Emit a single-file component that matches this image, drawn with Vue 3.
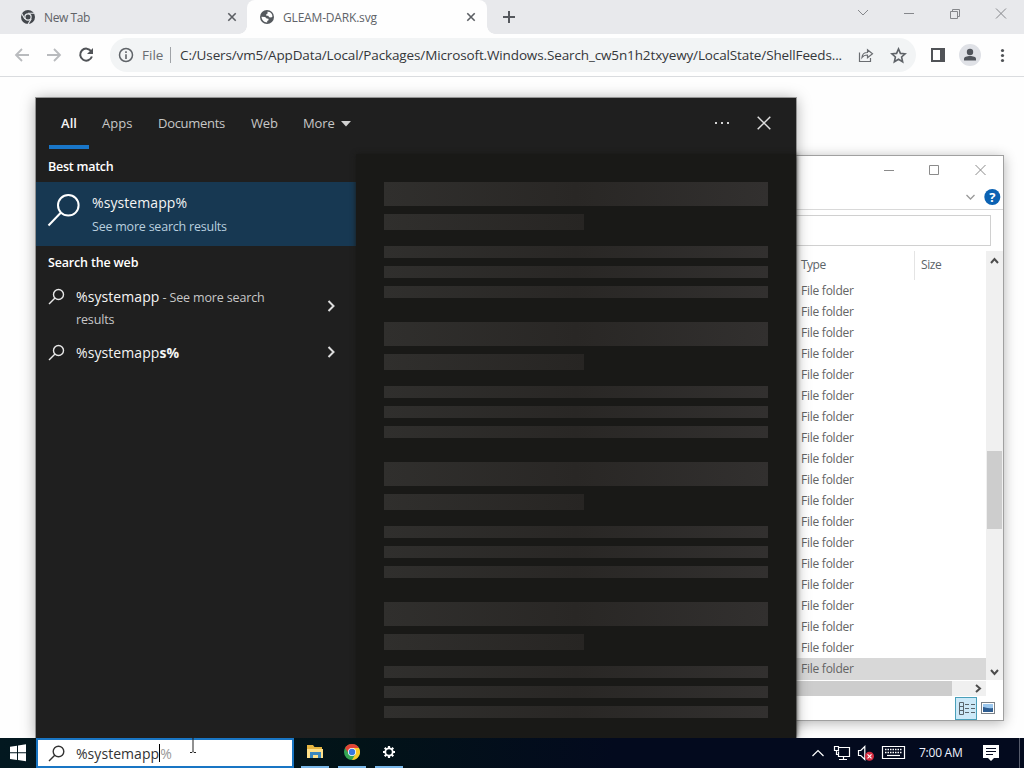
<script setup>
const rows = Array.from({ length: 19 }, (_, i) => i)
const blocks = [0, 1, 2, 3]
</script>

<template>
  <div class="desktop">
    <section class="browser">
      <div class="tabs">
        <div class="tab first">
          <svg class="fav" viewBox="0 0 16 16"><circle cx="8" cy="8" r="7" fill="#43474c" /><path d="M8 4.300h6.200M4.800 9.900 1.700 4.500M11.200 9.900 8 15.200" stroke="#e8eaed" stroke-width="1.100" /><circle cx="8" cy="8" r="3.700" fill="#e8eaed" /><circle cx="8" cy="8" r="2.500" fill="#43474c" /></svg>
          <span class="t1">New Tab</span>
          <svg class="x" viewBox="0 0 10 10"><path d="m1.300 1.300 7.400 7.400m0-7.400L1.300 8.700" /></svg>
        </div>
        <div class="tab active">
          <svg class="fav" viewBox="0 0 16 16"><circle cx="8" cy="8" r="7" fill="#55595e" /><path d="M8.300 2.800c2.600-.4 5 1.700 5.200 4.700l-1.300 1-2-.2-1-1.500H7.300V5.300l1.500-1zM2.500 7.800l3.600.2 1.600 1.600 1.800.2v1.500l-1.300.6v1.500C5 13.300 2.700 11 2.500 7.800z" fill="#fff" /></svg>
          <span class="t2">GLEAM-DARK.svg</span>
          <svg class="x" viewBox="0 0 10 10"><path d="m1.300 1.300 7.400 7.400m0-7.400L1.300 8.700" /></svg>
        </div>
        <svg class="plus" viewBox="0 0 12 12"><path d="M6 0v12M0 6h12" /></svg>
        <svg class="winctl" viewBox="0 0 160 20"><path d="m8 7 5 5 5-5M54 10.500h10M100.500 8.500h7v7h-7zM102.500 8.500v-2h7v7h-2M146 5.500l10 10m0-10-10 10" /></svg>
      </div>
      <div class="bar">
        <svg class="nav" viewBox="0 0 110 38">
          <g fill="none" stroke="#b9bbbe" stroke-width="1.800"><path d="M29 20H16m6-6-6 6 6 6M47 20h13m-6-6 6 6-6 6" /></g>
          <path d="M91.200 16.300a6 6 0 1 0 .7 5.200" fill="none" stroke="#505357" stroke-width="2" /><path d="M93 13v6h-6z" fill="#505357" />
        </svg>
        <div class="omni">
          <svg class="info" viewBox="0 0 16 16"><circle cx="8" cy="8" r="6.500" fill="none" stroke="#5f6368" stroke-width="1.500" /><path d="M8 7.300V12M8 4.200v1.700" stroke="#5f6368" stroke-width="1.600" /></svg>
          <span class="file">File</span><i class="divider"></i>
          <span class="url">C:/Users/vm5/AppData/Local/Packages/Microsoft.Windows.Search_cw5n1h2txyewy/LocalState/ShellFeeds...</span>
          <svg class="share" viewBox="0 0 16 16"><path d="M1.500 5.500v9h11V11M4 10.500c.2-3.500 2.200-5 5.500-5V2.700l5 4-5 4V8C7 8 5.300 8.700 4 10.500z" /></svg>
          <svg class="star" viewBox="0 0 16 16"><path d="m8 1.800 1.800 4.200 4.500.4-3.400 3 1 4.500L8 11.500l-3.900 2.400 1-4.500-3.400-3 4.500-.4z" /></svg>
        </div>
        <svg class="tools" viewBox="0 0 100 38">
          <path d="M10 14h12v12H10z" fill="none" stroke="#505357" stroke-width="2" /><path d="M18 13h5v14h-5z" fill="#505357" />
          <circle cx="48" cy="20" r="11" fill="#dfe1e6" /><circle cx="48" cy="17" r="3.200" fill="#50545b" /><path d="M42 25.500v-1.700c0-1.800 3-2.800 6-2.800s6 1 6 2.800v1.700z" fill="#50545b" />
          <g fill="#505357"><circle cx="80.500" cy="15.500" r="1.600" /><circle cx="80.500" cy="20.500" r="1.600" /><circle cx="80.500" cy="25.500" r="1.600" /></g>
        </svg>
      </div>
    </section>

    <section class="explorer">
      <svg class="exctl" viewBox="0 0 223 53">
        <g fill="none" stroke="#8b8b8b" stroke-width="1"><path d="M103 14.500h10M148.500 9.500h9v9h-9zM194.500 9l10 10m0-10-10 10" /></g>
        <path d="m185.500 39 4 4 4-4" fill="none" stroke="#999" stroke-width="1.300" />
        <circle cx="211.300" cy="41" r="8" fill="#0b62b3" />
        <text x="211.300" y="45.700" text-anchor="middle">?</text>
      </svg>
      <div class="address"><div></div></div>
      <div class="listing">
        <div class="content">
          <div class="columns"><span class="type">Type</span><span class="size">Size</span></div>
          <div v-for="r in rows" :key="r" class="row" :class="{ selected: r === 18 }"><span>File folder</span></div>
        </div>
        <div class="vscroll">
          <svg viewBox="0 0 15 18"><path d="m4 12 3.500-4 3.500 4" /></svg>
          <i></i>
          <svg class="down" viewBox="0 0 15 18"><path d="m4 8 3.500 4 3.500-4" /></svg>
        </div>
      </div>
      <div class="hscroll"><i></i><svg viewBox="0 0 15 15"><path d="m6 4 4 3.500-4 3.500" /></svg></div>
      <div class="status">
        <svg class="details" viewBox="0 0 22 23"><rect x=".5" y=".5" width="21" height="22" /><path d="M4.500 5.500h4v12h-4zM4.500 9.500h4M4.500 13.500h4M10 7.500h4M16 7.500h4M10 11.500h4M16 11.500h4M10 15.500h4M16 15.500h4" stroke="#59656c" /></svg>
        <svg class="thumb" viewBox="0 0 14 12"><rect x=".5" y=".5" width="13" height="11" fill="#fff" stroke="#7c8288" /><path d="M2 2h10v8H2z" fill="#9bc7ee" /><path d="M2 5c3 0 4 2 10 1v4H2z" fill="#2e5d91" /></svg>
      </div>
    </section>

    <section class="search">
      <nav>
        <b class="all">All</b><span class="apps">Apps</span><span class="docs">Documents</span><span class="webtab">Web</span><span class="more">More</span>
        <svg class="caret" viewBox="0 0 10 6"><path d="M0 0h10L5 5.500z" /></svg>
        <svg class="dots" viewBox="0 0 16 4"><path d="M1 1h2v2H1zM7 1h2v2H7zM13 1h2v2h-2z" /></svg>
        <svg class="close" viewBox="0 0 14 14"><path d="m.7.700 12.600 12.600m0-12.600L.7 13.300" /></svg>
      </nav>
      <div class="panes">
        <div class="results">
          <h2>Best match</h2>
          <div class="best">
            <svg viewBox="0 0 34 34"><circle cx="21.300" cy="12.300" r="10.300" /><path d="M14 19.500 1.500 32.500" /></svg>
            <div><p class="main">%systemapp%</p><p class="sub">See more search results</p></div>
          </div>
          <h2 class="web">Search the web</h2>
          <div class="hit tall">
            <svg class="mag" viewBox="0 0 17 17"><circle cx="10.500" cy="6.500" r="5" /><path d="m7 10-6 6" /></svg>
            <p><span class="main">%systemapp</span><span class="sub"> - See more search<br>results</span></p>
            <svg class="chev" viewBox="0 0 8 12"><path d="m1.500 1 5 5-5 5" /></svg>
          </div>
          <div class="hit">
            <svg class="mag" viewBox="0 0 17 17"><circle cx="10.500" cy="6.500" r="5" /><path d="m7 10-6 6" /></svg>
            <p><span class="main">%systemapp<b>s%</b></span></p>
            <svg class="chev" viewBox="0 0 8 12"><path d="m1.500 1 5 5-5 5" /></svg>
          </div>
        </div>
        <div class="preview">
          <div v-for="b in blocks" :key="b" class="skeleton"><i class="title"></i><i class="short"></i><i></i><i></i><i></i></div>
        </div>
      </div>
    </section>

    <footer class="taskbar">
      <svg class="start" viewBox="0 0 36 30"><path d="m10 8.700 7-1v6.600h-7zM18 7.500l8-1.200v8h-8zM10 15.300h7v6.600l-7-1zM18 15.300h8v8l-8-1.200z" /></svg>
      <div class="input">
        <svg class="mag" viewBox="0 0 17 17"><circle cx="10.500" cy="6.500" r="5.300" /><path d="m7 10-6 6" /></svg>
        <span class="typed">%systemapp</span><i></i><span class="ghost">%</span>
      </div>
      <div class="app"><svg class="folder" viewBox="0 0 18 16"><path d="M1 1h6l1.500 2H16v11H1z" fill="#e5b541" /><path d="M1 5h16v9H1z" fill="#ffe08a" /><path d="M4 8h11v6h-3v-3H7v3H4z" fill="#3c87bd" /></svg></div>
      <div class="app"><svg viewBox="0 0 16 16"><circle cx="8" cy="8" r="8" fill="#35a453" /><path d="M1.070 4A8 8 0 0 1 14.930 4H8v4L5 9.700z" fill="#e24335" /><path d="M14.930 4A8 8 0 0 1 8 16l3.500-6L8 4z" fill="#fbc928" /><circle cx="8" cy="8" r="4" fill="#fff" /><circle cx="8" cy="8" r="3.200" fill="#3978e0" /></svg></div>
      <div class="app"><svg viewBox="0 0 16 16"><circle cx="8" cy="8" r="3.700" fill="none" stroke="#fff" stroke-width="1.800" /><path d="M8 2v2M8 12v2M2 8h2M12 8h2M3.760 3.760l1.400 1.400M10.840 10.840l1.400 1.400M3.760 12.240l1.400-1.400M10.840 5.160l1.400-1.400" stroke="#fff" stroke-width="2.200" /></svg></div>
      <svg class="tray" viewBox="0 0 100 30">
        <g fill="none" stroke="#fff" stroke-width="1.200"><path d="m2.500 18 5.500-5.500 5.500 5.500" /><path d="M28 9.500h11.500v9H28.500v-5M33.500 18.500v3M29 21.500h8M24.500 8.500h4v4h-4zM26.500 12.500v4h2" /><path d="M48.500 12.500h2.300l4-4v13l-4-4h-2.300z" /><path d="M72.500 8.500h22v12h-22z" /></g>
        <path d="M75 11.500h17M75 14.500h17" stroke="#fff" stroke-width="1.500" stroke-dasharray="1.500 1" /><path d="M77 17.500h13" stroke="#fff" stroke-width="1.200" />
        <circle cx="59.500" cy="18.300" r="4.500" fill="#d52d42" /><path d="m57.500 16.300 4 4m0-4-4 4" stroke="#fff" stroke-width="1.100" />
      </svg>
      <time>7:00 AM</time>
      <svg class="notice" viewBox="0 0 16 16"><path d="M0 0h16v13h-5l-3 3-3-3H0z" fill="#fff" /><path d="M3 3.500h10M3 6.500h10M3 9.500h7" stroke="#050b20" stroke-width="1.200" /></svg>
      <i class="edge"></i>
    </footer>
    <svg class="cursor" viewBox="0 0 8 16"><path d="M1 .5h2l1 1 1-1h2M4 1.500v13M1 15.500h2l1-1 1 1h2" /></svg>
  </div>
</template>

<style>
body { margin: 0; overflow: hidden; }
</style>

<style scoped>
* { box-sizing: border-box; }
svg { display: block; flex: none; }
p, h2 { margin: 0; }
.desktop { position: relative; width: 1024px; height: 768px; overflow: hidden; background: #fefefe; font-family: "Open Sans", "Noto Sans", sans-serif; white-space: nowrap; }
.tabs { height: 34px; background: #e8e9ec; display: flex; align-items: center; position: relative; }
.tab { display: flex; align-items: center; height: 34px; font-size: 12px; color: #606368; }
.tab.first { width: 247px; padding-left: 20px; }
.tab.active { width: 240px; padding-left: 12px; background: #fefefe; border-radius: 8px 8px 0 0; position: relative; }
.tab.active::before, .tab.active::after { content: ""; position: absolute; bottom: 0; width: 8px; height: 8px; }
.tab.active::before { left: -8px; background: radial-gradient(circle at 0 0, transparent 7.500px, #fefefe 8px); }
.tab.active::after { right: -8px; background: radial-gradient(circle at 100% 0, transparent 7.500px, #fefefe 8px); }
.fav { width: 16px; height: 16px; margin-right: 8px; }
.x { width: 10px; height: 10px; margin-left: auto; margin-right: 10px; fill: none; stroke: #5b5e63; stroke-width: 1.600; }
.tab.active .x { margin-right: 11px; }
.t1 { letter-spacing: -.4px; }
.t2 { letter-spacing: -.18px; }
.plus { width: 12px; height: 12px; margin-left: 16px; stroke: #55585d; stroke-width: 2; }
.winctl { width: 160px; height: 20px; margin-left: auto; margin-right: 14px; margin-top: -8px; fill: none; stroke: #85878b; stroke-width: 1; }
.bar { height: 43px; padding-top: 4px; display: flex; border-bottom: 1px solid #dadcdf; }
.nav { width: 110px; height: 38px; margin-top: -3px; }
.omni { width: 806px; height: 34px; border-radius: 17px; background: #f2f4f5; display: flex; align-items: center; padding-left: 8px; font-size: 14px; }
.info { width: 16px; height: 16px; margin-right: 8px; }
.file { width: 28px; color: #6a6d72; font-size: 13.500px; }
.divider { width: 1px; height: 16px; background: #a0a3a7; }
.url { width: 677px; margin-left: 9px; color: #35373a; font-size: 13.500px; letter-spacing: -.128px; }
.share { width: 16px; height: 16px; margin-left: 1px; fill: none; stroke: #6a6d71; stroke-width: 1.200; }
.star { width: 17px; height: 17px; margin-left: 16px; fill: none; stroke: #5f6368; stroke-width: 1.500; }
.tools { width: 100px; height: 38px; margin-left: 6px; margin-top: -3px; }

.explorer { position: absolute; left: 780px; top: 155px; width: 224px; height: 566px; background: #fff; border: 1px solid #a0a0a0; box-shadow: 0 2px 12px rgba(0,0,0,.3); color: #646464; font-size: 12px; display: flex; flex-direction: column; }
.exctl { width: 223px; height: 53px; }
.exctl text { font: bold 13px "Open Sans", sans-serif; fill: #fff; }
.address { height: 42px; padding: 5px 12px 0 0; border-top: 1px solid #d9d9d9; }
.address div { height: 31px; border: 1px solid #d0d0d0; }
.listing { display: flex; height: 429px; }
.content { width: 205px; }
.columns { height: 29px; display: flex; line-height: 28px; color: #5c6469; }
.type { width: 134px; padding-left: 20px; border-right: 1px solid #e4e4e4; letter-spacing: -.5px; }
.size { padding-left: 6px; letter-spacing: -.4px; }
.row { height: 21px; line-height: 22px; padding-left: 20px; letter-spacing: -.25px; }
.row.selected { height: 22px; background: #d8d8d8; }
.vscroll { width: 17px; background: #f0f0f0; display: flex; flex-direction: column; align-items: center; }
.vscroll svg, .hscroll svg { width: 15px; height: 18px; fill: none; stroke: #4c4c4c; stroke-width: 2; }
.vscroll i { width: 15px; height: 78px; background: #cdcdcd; margin-top: 182px; }
.vscroll .down { margin-top: auto; }
.hscroll { height: 15px; width: 205px; margin-top: 1px; background: #f0f0f0; display: flex; justify-content: space-between; align-items: center; }
.hscroll i { width: 171px; height: 15px; background: #cdcdcd; }
.hscroll svg { height: 15px; margin-right: 1px; }
.status { display: flex; padding-left: 174px; align-items: center; height: 24px; }
.details { width: 22px; height: 23px; fill: #cce9f8; stroke: #4aa0ba; }
.details path { fill: none; }
.thumb { width: 14px; height: 12px; margin-left: 4px; }

.search { position: absolute; left: 36px; top: 98px; width: 760px; height: 640px; background: #1f1f1f; box-shadow: 0 0 0 1px rgba(90,90,90,.55), 0 1px 14px rgba(0,0,0,.35); color: #fff; }
nav { display: flex; align-items: center; height: 51px; padding-left: 13px; font-size: 13px; color: #c7c7c7; }
nav .all { width: 40px; height: 51px; text-align: center; line-height: 51px; border-bottom: 4px solid #1976c8; color: #f4f4f4; margin-right: 13px; font-weight: 600; }
nav span, .dots, .close { margin-bottom: 2px; }
.apps { width: 56px; }
.docs { width: 93px; letter-spacing: -.3px; }
.webtab { width: 52px; letter-spacing: -.2px; }
.more { width: 38px; letter-spacing: -.1px; }
.caret { width: 10px; height: 6px; fill: #d0d0d0; }
.dots { width: 16px; height: 4px; fill: #d4d4d4; margin-left: auto; margin-right: 27px; }
.close { width: 14px; height: 14px; margin-right: 25px; stroke: #dedede; stroke-width: 1.500; }
.panes { display: flex; height: 589px; }
.results { width: 320px; }
h2 { height: 33px; padding-left: 12px; font-size: 12.500px; line-height: 35px; font-weight: 600; letter-spacing: -.25px; }
.best { height: 64px; background: #173852; display: flex; padding: 8px 0 0 11px; }
.best > svg { width: 34px; height: 38px; margin-right: 11px; margin-top: 1px; fill: none; stroke: #fff; stroke-width: 2; }
.main { font-size: 14px; color: #f4f4f4; letter-spacing: .08px; }
.sub { font-size: 12.500px; color: #c7c7c7; letter-spacing: -.15px; }
.best .main { line-height: 26px; }
.best .sub { line-height: 21px; color: #b9cfdf; letter-spacing: -.22px; }
h2.web { line-height: 33px; height: 34px; letter-spacing: -.17px; }
.hit { height: 40px; padding-left: 12px; display: flex; }
.hit.tall { height: 56px; }
.mag { width: 17px; height: 17px; margin-right: 11px; margin-top: 8px; fill: none; stroke: #e8e8e8; stroke-width: 1.400; }
.hit p { line-height: 21px; padding-top: 6px; width: 251px; }
.hit:not(.tall) p { line-height: 32px; padding-top: 0; }
.chev { width: 8px; height: 12px; fill: none; stroke: #ddd; stroke-width: 2; margin-top: 10px; }
.tall .chev { margin-top: 20px; }
.preview { width: 440px; background: #191917; padding: 28px 28px 0; margin-top: 5px; height: 584px; box-shadow: 0 0 5px #191917; }
.skeleton { height: 140px; display: flex; flex-direction: column; }
.skeleton i { height: 12px; width: 384px; margin-bottom: 8px; background: linear-gradient(90deg, #302f2d, #292725 50%, #32302f); }
.skeleton .title { height: 24px; }
.skeleton .short { height: 16px; width: 200px; margin-bottom: 16px; background: linear-gradient(90deg, #302f2d, #272523); }

.taskbar { position: absolute; left: 0; top: 738px; width: 1024px; height: 30px; background: linear-gradient(90deg, #031820, #021318 35%, #030a1e 60%); display: flex; }
.start { width: 36px; height: 30px; fill: #fff; }
.input { width: 258px; height: 30px; border: 2px solid #1976c4; background: #fff; display: flex; align-items: center; padding-left: 10px; color: #333; font-size: 14px; letter-spacing: .05px; margin-right: 3px; }
.input .mag { stroke: #333; margin-top: 0; margin-right: 11px; }
.input i { width: 1px; height: 18px; background: #000; }
.ghost { color: #999; }
.app { width: 28px; margin-left: 4px; margin-right: 5px; height: 30px; border-bottom: 2px solid #79b7e9; display: flex; justify-content: center; align-items: center; }
.app svg { width: 16px; height: 16px; }
.app .folder { width: 18px; }
.tray { width: 100px; height: 30px; margin-left: auto; }
time { color: #eef2ff; font-size: 12px; line-height: 29px; width: 44px; margin-left: 9px; letter-spacing: -.25px; }
.notice { width: 16px; height: 16px; margin: 7px 20px 0 20px; }
.edge { width: 1px; background: #575c6c; margin-right: 4px; }
.cursor { position: absolute; left: 189px; top: 737px; width: 8px; height: 16px; fill: none; stroke: #222; }
</style>
